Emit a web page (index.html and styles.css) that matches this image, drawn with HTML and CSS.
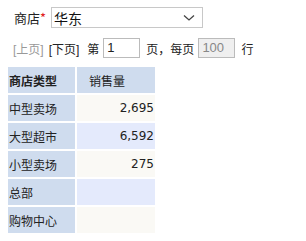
FILE: index.html
```html
<!DOCTYPE html>
<html>
<head>
<meta charset="utf-8">
<link rel="stylesheet" href="styles.css">
</head>
<body>
<div class="filter">
  <span class="label">商店<span class="req">*</span></span>
  <div class="select">
    <span class="value">华东</span>
    <svg class="chev" width="12" height="8" viewBox="0 0 12 8"><path d="M1 1.5 L6 6 L11 1.5" fill="none" stroke="#444" stroke-width="1.3"/></svg>
  </div>
</div>
<div class="pager">
  <span class="disabled">[上页]</span>
  <span class="link">[下页]</span>
  <span class="t-di">第</span>
  <span class="box">1</span>
  <span class="t-mid">页，每页</span>
  <span class="box grey">100</span>
  <span class="t-row">行</span>
</div>
<table class="grid">
  <tr><th class="c1">商店类型</th><th class="c2">销售量</th></tr>
  <tr class="odd"><td class="c1">中型卖场</td><td class="num">2,695</td></tr>
  <tr class="even"><td class="c1">大型超市</td><td class="num">6,592</td></tr>
  <tr class="odd"><td class="c1">小型卖场</td><td class="num">275</td></tr>
  <tr class="even"><td class="c1">总部</td><td class="num"></td></tr>
  <tr class="odd"><td class="c1">购物中心</td><td class="num"></td></tr>
</table>
</body>
</html>
```
FILE: styles.css
```css
body {
  margin: 0;
  padding: 7px 8px 0 8px;
  font-family: "Noto Sans CJK SC", "DejaVu Sans", sans-serif;
  color: #222;
  background: #fff;
}
.filter {
  display: flex;
  align-items: center;
  height: 21px;
}
.label {
  font-size: 13px;
  margin-left: 6px;
  width: 37px;
}
.req { color: #e02020; }
.select {
  height: 19px;
  border: 1px solid #c8c8c8;
  display: flex;
  align-items: center;
  justify-content: space-between;
  padding: 0 7px 0 2px;
  box-sizing: content-box;
  width: 141px;
}
.value { font-size: 14px; color: #111; }
.chev { margin-top: 1px; }
.pager {
  display: flex;
  align-items: center;
  margin-top: 10px;
  margin-left: 5px;
  height: 20px;
  font-family: "Liberation Sans", "Noto Sans CJK SC", sans-serif;
  font-size: 12px;
  color: #222;
}
.disabled { color: #999; margin-right: 5px; }
.link { margin-right: 8px; }
.t-di { margin-right: 4px; }
.t-mid { margin: 0 4px 0 6px; }
.t-row { margin-left: 6px; }
.box {
  display: inline-block;
  width: 32px;
  height: 18px;
  line-height: 18px;
  border: 1px solid #bbb;
  padding-left: 3px;
  font-size: 13px;
  background: #fff;
}
.box.grey { background: #efefef; color: #888; }
.grid {
  border-collapse: separate;
  border-spacing: 2px;
  margin-top: 7px;
  margin-left: -2px;
  font-size: 12px;
}
.grid th, .grid td {
  height: 26px;
  padding: 0 2px 0 1px;
  font-weight: normal;
  text-align: left;
}
.grid th { background: #cfdcee; }
.grid th.c1 { font-weight: bold; width: 64px; }
.grid th.c2 { width: 64px; padding-left: 12px; }
.grid td.c1 { background: #cfdcee; }
.grid tr.odd td.num { background: #faf9f5; }
.grid tr.even td.num { background: #e4eafc; }
.grid td.num {
  text-align: right;
  font-family: "DejaVu Sans", sans-serif;
  font-size: 12px;
  padding-right: 1px;
}
```
